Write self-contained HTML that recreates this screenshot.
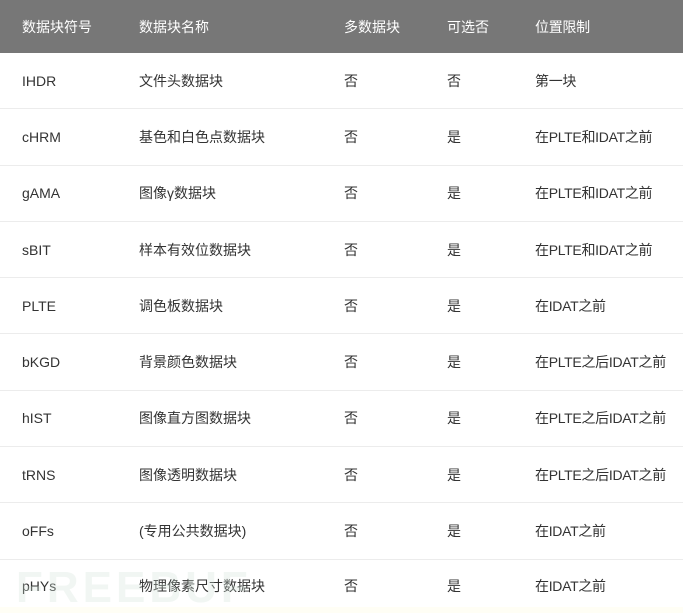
<!DOCTYPE html>
<html><head><meta charset="utf-8"><style>
html,body{margin:0;padding:0;background:#fffef5;width:683px;height:613px;overflow:hidden;font-family:"Liberation Sans","Noto Sans CJK SC",sans-serif;}
.t{position:absolute;left:0;top:0;width:683px;background:#fff;}
.r{position:relative;height:56.3px;border-bottom:1.5px solid #ececec;box-sizing:border-box;font-size:14px;color:#333;}
.r span{position:absolute;top:50%;transform:translateY(-50%);white-space:nowrap;}
.h{background:#777;color:#fff;height:53px;border:none;}
.c1{left:22px}.c2{left:139px}.c3{left:344px}.c4{left:447px}.c5{left:535px;letter-spacing:-0.3px}
.wm{position:absolute;left:16px;top:566px;font-size:44px;font-weight:bold;color:rgba(210,225,215,0.3);letter-spacing:4px;line-height:1;}
</style></head><body>
<div class="t">
<div class="r h"><span class="c1">数据块符号</span><span class="c2">数据块名称</span><span class="c3">多数据块</span><span class="c4">可选否</span><span class="c5">位置限制</span></div>
<div class="r"><span class="c1">IHDR</span><span class="c2">文件头数据块</span><span class="c3">否</span><span class="c4">否</span><span class="c5">第一块</span></div>
<div class="r"><span class="c1">cHRM</span><span class="c2">基色和白色点数据块</span><span class="c3">否</span><span class="c4">是</span><span class="c5">在PLTE和IDAT之前</span></div>
<div class="r"><span class="c1">gAMA</span><span class="c2">图像γ数据块</span><span class="c3">否</span><span class="c4">是</span><span class="c5">在PLTE和IDAT之前</span></div>
<div class="r"><span class="c1">sBIT</span><span class="c2">样本有效位数据块</span><span class="c3">否</span><span class="c4">是</span><span class="c5">在PLTE和IDAT之前</span></div>
<div class="r"><span class="c1">PLTE</span><span class="c2">调色板数据块</span><span class="c3">否</span><span class="c4">是</span><span class="c5">在IDAT之前</span></div>
<div class="r"><span class="c1">bKGD</span><span class="c2">背景颜色数据块</span><span class="c3">否</span><span class="c4">是</span><span class="c5">在PLTE之后IDAT之前</span></div>
<div class="r"><span class="c1">hIST</span><span class="c2">图像直方图数据块</span><span class="c3">否</span><span class="c4">是</span><span class="c5">在PLTE之后IDAT之前</span></div>
<div class="r"><span class="c1">tRNS</span><span class="c2">图像透明数据块</span><span class="c3">否</span><span class="c4">是</span><span class="c5">在PLTE之后IDAT之前</span></div>
<div class="r"><span class="c1">oFFs</span><span class="c2">(专用公共数据块)</span><span class="c3">否</span><span class="c4">是</span><span class="c5">在IDAT之前</span></div>
<div class="r" style="height:47px;border:none"><span class="c1" style="top:26px">pHYs</span><span class="c2" style="top:26px">物理像素尺寸数据块</span><span class="c3" style="top:26px">否</span><span class="c4" style="top:26px">是</span><span class="c5" style="top:26px">在IDAT之前</span></div>
</div>
<div class="wm">FREEBUF</div>
</body></html>
